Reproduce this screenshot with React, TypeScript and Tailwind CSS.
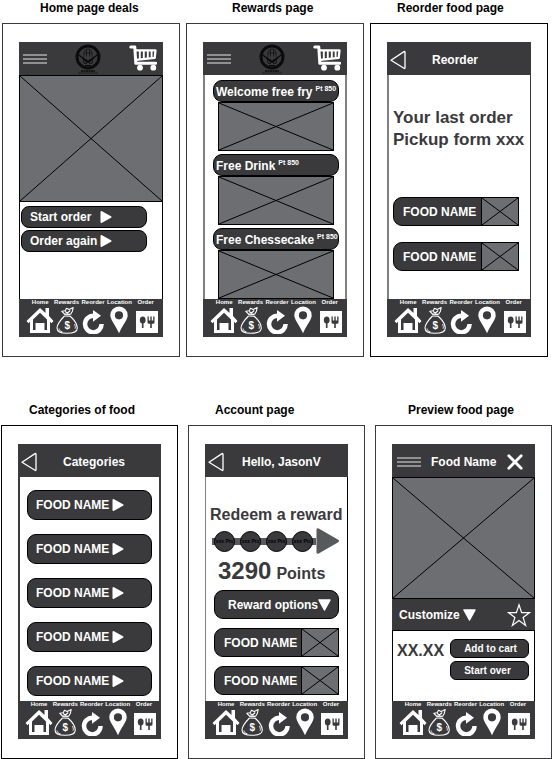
import React from 'react';
import { clsx } from 'clsx';

type BoxProps = { className?: string };
type ChildrenProps = BoxProps & { children: React.ReactNode };

/* ---------- icons ---------- */

const MenuIcon = () => (
  <svg width="24" height="10" viewBox="0 0 24 10" stroke="#e6e6e6" strokeWidth="1.2">
    <path d="M0 1h24M0 5h24M0 9h24" />
  </svg>
);

const LogoIcon = () => (
  <svg width="26" height="30" viewBox="0 0 26 30" fill="none" stroke="#0b0b0b">
    <circle cx="13" cy="13" r="11" strokeWidth="3" />
    <path d="M9 13V9c0-2.500 2-4 4-4s4 1.500 4 4v4M11.500 5.500v7M14.500 5.500v7M9 9h8" strokeWidth="0.700" />
    <path d="M4 11l8 7M22 11l-8 7M7 13l6 5 6-5" strokeWidth="1.300" />
    <circle cx="10.500" cy="17.500" r="2" strokeWidth="1" />
    <circle cx="15.500" cy="17.500" r="2" strokeWidth="1" />
    <path d="M10 21.500h6" strokeWidth="1" />
    <path d="M6 27h14" strokeWidth="1.500" strokeDasharray="2 0.500" />
    <path d="M3 29h20" strokeWidth="0.500" />
  </svg>
);

const CartIcon = () => (
  <svg width="28" height="28" viewBox="0 0 28 28" fill="none" stroke="#fff" strokeLinecap="round" strokeLinejoin="round">
    <path d="M1.800 2h4l1 16.300h20" strokeWidth="3" />
    <path d="M6.500 5.400h20l-.8 7.400L7 14.800" strokeWidth="2.300" />
    <path d="M10.800 6v8M14.800 6v7.500M18.800 6v7.200M22.600 6v6.800" strokeWidth="1.900" />
    <circle cx="11" cy="22.700" r="2.900" fill="#fff" stroke="none" />
    <circle cx="24.300" cy="22.700" r="2.900" fill="#fff" stroke="none" />
  </svg>
);

const BackIcon = () => (
  <svg width="16" height="20" viewBox="0 0 16 20" fill="none" stroke="#fff" strokeWidth="1.300" strokeLinejoin="round">
    <path d="M1 10.200 14 1.600q1-.5 1 .6v15.600q0 1.100-1 .5z" />
  </svg>
);

const CloseIcon = () => (
  <svg width="16" height="16" viewBox="0 0 16 16" stroke="#fff" strokeWidth="2.800" strokeLinecap="round">
    <path d="M1.800 1.800l12.400 12.400M14.200 1.800L1.800 14.200" />
  </svg>
);

const StarIcon = () => (
  <svg width="24" height="24" viewBox="0 0 24 24" fill="none" stroke="#fff" strokeWidth="1.200">
    <path d="M12 1.800l2.600 7.800h8l-6.500 4.900 2.500 7.900-6.600-4.900-6.600 4.900 2.500-7.900L1.400 9.600h8z" />
  </svg>
);

const PlayIcon = () => (
  <svg width="12" height="14" viewBox="0 0 12 14" fill="#fff" stroke="#fff" strokeWidth="2" strokeLinejoin="round">
    <path d="M1.500 2l9 5-9 5z" />
  </svg>
);

const DownIcon = () => (
  <svg width="13" height="13" viewBox="0 0 13 13" fill="#fff" stroke="#fff" strokeWidth="1.500" strokeLinejoin="round">
    <path d="M1 2h11L6.500 12z" />
  </svg>
);

const HomeIcon = () => (
  <>
    <path d="M19.500 2h3.500v8l4.500 5-2 2.200L24 15.700V27H4V15.700L2.500 17.200.5 15 14 2l5.500 5z" fill="#fff" />
    <path d="M7 13.500l7-6.800 7 6.800V24h-2.500v-7h-9v7H7z" fill="#3a3a3c" />
  </>
);

const RewardsIcon = () => (
  <g fill="none" stroke="#fff" strokeWidth="1.100" strokeLinejoin="round">
    <path d="M12 8.500L8.800 5.300l3.400-.6 1.300-2.500 2.700 1.300 4-2-.8 3.700-1.600 2.800-1.800.8z" />
    <path d="M12 5.500l2.500 1.500 2.700-2.500M12 8l5 .3M11.500 10l5.500.2" />
    <path d="M11.500 10C8 13.500 4 17.500 4 22c0 4 3 5.300 10 5.300s10.300-1.300 10.300-5.300c0-4.500-3.500-8.500-7.300-12" />
    <path d="M6 22.500c.3 2 1.300 3 3.500 3.400M21.500 18c.9 2 1 3.500.6 4.700" strokeWidth="0.900" />
    <text x="14.200" y="23.300" fill="#fff" stroke="none" fontSize="10" fontWeight="bold" textAnchor="middle">
      $
    </text>
  </g>
);

const ReorderIcon = () => (
  <>
    <path d="M14.500 9.800A8.300 8.300 0 1 0 22.600 18" fill="none" stroke="#fff" strokeWidth="4.500" />
    <path d="M14 4l8 5.800-8 6z" fill="#fff" />
  </>
);

const LocationIcon = () => (
  <path
    fill="#fff"
    fillRule="evenodd"
    d="M14 .5a8.700 8.700 0 0 1 8.700 8.700c0 4.300-5 9.800-8.700 18-3.700-8.200-8.700-13.700-8.700-18A8.700 8.700 0 0 1 14 .5zm0 4.700a4.100 4.100 0 1 0 0 8.200 4.100 4.100 0 0 0 0-8.200z"
  />
);

const OrderIcon = () => (
  <>
    <path d="M4 5h22v22H4z" fill="#fff" />
    <ellipse cx="10.700" cy="14" rx="2.900" ry="3.600" fill="#3a3a3c" />
    <path d="M10.700 16v6M19 16v6" stroke="#3a3a3c" strokeWidth="1.600" />
    <path d="M15.500 10.500h1.300v4h1.500v-4h1.400v4h1.500v-4h1.300v5.700q0 1.500-1.500 1.500h-4q-1.500 0-1.500-1.500z" fill="#3a3a3c" />
  </>
);

const navItems = [
  { label: 'Home', icon: HomeIcon },
  { label: 'Rewards', icon: RewardsIcon },
  { label: 'Reorder', icon: ReorderIcon },
  { label: 'Location', icon: LocationIcon },
  { label: 'Order', icon: OrderIcon },
];

/* ---------- shared blocks ---------- */

const BottomNav = () => (
  <nav className="grid grid-cols-5 bg-[#3a3a3c] pl-2 pr-1 pb-[3px]">
    {navItems.map(({ label, icon: Icon }) => (
      <a key={label} href="#" className="flex min-w-0 flex-col items-center text-[6px] leading-[7px] font-bold whitespace-nowrap text-white">
        {label}
        <svg className="shrink-0" width="28" height="28" viewBox="0 0 28 28">
          <Icon />
        </svg>
      </a>
    ))}
  </nav>
);

const Placeholder: React.FC<BoxProps> = ({ className }) => (
  <div className={clsx('border border-black bg-[#6d6e71]', className)}>
    <svg className="block h-full w-full" viewBox="0 0 100 100" preserveAspectRatio="none" stroke="#000">
      <path d="M0 0l100 100M100 0L0 100" vectorEffect="non-scaling-stroke" />
    </svg>
  </div>
);

const Header: React.FC<ChildrenProps> = ({ className, children }) => (
  <header className={clsx('flex h-[33px] items-center bg-[#3a3a3c] text-white', className)}>{children}</header>
);

const BackHeader: React.FC<{ title: string; className?: string }> = ({ title, className = 'gap-[26px]' }) => (
  <Header className={clsx('pl-[3px] pt-[2px]', className)}>
    <button aria-label="Back">
      <BackIcon />
    </button>
    <h3>{title}</h3>
  </Header>
);

const BrandHeader = () => (
  <Header className="justify-between pl-1 pr-[6px]">
    <button aria-label="Menu">
      <MenuIcon />
    </button>
    <LogoIcon />
    <button aria-label="Cart">
      <CartIcon />
    </button>
  </Header>
);

const Pill: React.FC<ChildrenProps> = ({ className, children }) => (
  <button className={clsx('flex items-center border border-black bg-[#3a3a3c] whitespace-nowrap text-white', className)}>
    {children}
  </button>
);

const FoodRow = () => (
  <Pill className="h-[29px] rounded-l-[9px] pl-[9px]">
    FOOD NAME
    <Placeholder className="-my-px -mr-px ml-auto h-[29px] w-[38px]" />
  </Pill>
);

const Screen: React.FC<ChildrenProps & { title: string; titleClass: string }> = ({ title, titleClass, className, children }) => (
  <section className="min-w-0 flex-1">
    <h2 className={clsx('mb-2 leading-[14px] text-black', titleClass)}>{title}</h2>
    <div className={clsx('border px-4 pt-[18px] pb-[19px]', className)}>
      {children}
      <BottomNav />
    </div>
  </section>
);

/* ---------- screens ---------- */

const HomeScreen = () => (
  <Screen title="Home page deals" titleClass="pl-[38px]" className="border-[#3a3a3c]">
    <BrandHeader />
    <div className="min-h-56 border-x border-black">
      <Placeholder className="-mx-px h-[127px]" />
      <div className="flex flex-col gap-[2px] pt-1 pl-px pr-[15px]">
        {['Start order', 'Order again'].map(label => (
          <Pill key={label} className="h-[22px] rounded-[8px] pl-2">
            <span className="min-w-[70px] text-left">{label}</span>
            <PlayIcon />
          </Pill>
        ))}
      </div>
    </div>
  </Screen>
);

const RewardsScreen = () => (
  <Screen title="Rewards page" titleClass="pl-[46px]" className="border-[#3a3a3c]">
    <BrandHeader />
    <div className="flex min-h-56 flex-col gap-[3px] border-x-2 border-[#808080] pt-[5px] pl-2 pr-[6px]">
      {['Welcome free fry', 'Free Drink', 'Free Chessecake'].map(name => (
        <article key={name}>
          <div className="flex h-[22px] gap-[3px] rounded-[9px] border border-black bg-[#3a3a3c] pl-[2px] whitespace-nowrap text-white">
            <h3 className="leading-[22px]">{name}</h3>
            <span className="text-[7px] leading-4">Pt 850</span>
          </div>
          <Placeholder className="mx-[5px] h-[49px]" />
        </article>
      ))}
    </div>
  </Screen>
);

const ReorderScreen = () => (
  <Screen title="Reorder food page" titleClass="pl-[27px]" className="border-black">
    <BackHeader title="Reorder" />
    <div className="min-h-56 border-l-2 border-r border-l-[#808080] border-r-[#3a3a3c] pt-8 pl-1 pr-[11px]">
      <p className="text-[17px] leading-[22px] whitespace-nowrap text-[#3a3a3c]">
        Your last order
        <br />
        Pickup form xxx
      </p>
      <div className="mt-[46px] flex flex-col gap-4">
        <FoodRow />
        <FoodRow />
      </div>
    </div>
  </Screen>
);

const CategoriesScreen = () => (
  <Screen title="Categories of food" titleClass="pl-7" className="border-black">
    <BackHeader title="Categories" />
    <div className="flex min-h-56 flex-col gap-[14px] border-x-2 border-[#3a3a3c] px-[7px] pt-[13px]">
      {[1, 2, 3, 4, 5].map(n => (
        <Pill key={n} className="h-[30px] rounded-[9px] pl-2">
          <span className="min-w-[76px] text-left">FOOD NAME</span>
          <PlayIcon />
        </Pill>
      ))}
    </div>
  </Screen>
);

const ProgressBar = () => (
  <div className="relative flex h-7 items-center pl-[2px]">
    <div className="h-[7px] w-[106px] bg-[#58595b]" />
    <svg width="24" height="28" viewBox="0 0 24 28" fill="#58595b" stroke="#58595b" strokeWidth="3" strokeLinejoin="round">
      <path d="M2 2.500L22 14 2 25.500z" />
    </svg>
    <div className="absolute left-1 flex gap-[5px]">
      {[1, 2, 3, 4].map(n => (
        <span
          key={n}
          className="flex size-[21px] items-center justify-center rounded-full border border-black bg-[#3a3a3c] text-[5px] leading-none whitespace-nowrap text-black"
        >
          xxx Pts
        </span>
      ))}
    </div>
  </div>
);

const AccountScreen = () => (
  <Screen title="Account page" titleClass="pl-[27px]" className="border-[#3a3a3c]">
    <BackHeader title="Hello, JasonV" className="gap-[18px]" />
    <div className="min-h-56 border-x border-l-[#808080] border-r-black pt-[26px] pl-1 pr-2">
      <h4 className="text-[16px] leading-6 whitespace-nowrap text-[#3a3a3c]">Redeem a reward</h4>
      <ProgressBar />
      <p className="mt-1 flex items-baseline gap-[5px] pl-2 text-[24px] leading-6 text-[#3a3a3c]">
        3290 <span className="text-[16px]">Points</span>
      </p>
      <div className="mt-1 flex flex-col gap-[9px] pl-1">
        <Pill className="h-[29px] justify-between rounded-[9px] pl-[13px] pr-[7px]">
          Reward options
          <DownIcon />
        </Pill>
        <FoodRow />
        <FoodRow />
      </div>
    </div>
  </Screen>
);

const PreviewScreen = () => (
  <Screen title="Preview food page" titleClass="pl-[33px]" className="border-[#3a3a3c]">
    <Header className="gap-[10px] pt-[2px] pl-[5px] pr-3">
      <button aria-label="Menu">
        <MenuIcon />
      </button>
      <h3>Food Name</h3>
      <button aria-label="Close" className="ml-auto">
        <CloseIcon />
      </button>
    </Header>
    <div className="min-h-56 border-x border-black">
      <Placeholder className="-mx-px h-[122px]" />
      <div className="-mx-px flex h-8 items-center justify-between border-b border-black bg-[#3a3a3c] pl-[7px] pr-1 text-white">
        <button className="flex items-center gap-[3px]">
          Customize
          <DownIcon />
        </button>
        <button aria-label="Favorite">
          <StarIcon />
        </button>
      </div>
      <div className="flex gap-[6px] pt-2 pl-1 pr-[5px]">
        <p className="text-[16px] leading-6 text-[#3a3a3c]">XX.XX</p>
        <div className="flex flex-1 flex-col gap-[3px] text-[10px]">
          <Pill className="h-[19px] rounded-[6px] pl-[13px]">Add to cart</Pill>
          <Pill className="h-[19px] rounded-[6px] pl-[13px]">Start over</Pill>
        </div>
      </div>
    </div>
  </Screen>
);

export default function App() {
  return (
    <main className="bg-white font-['Liberation_Sans',Arial,sans-serif] text-[12px] leading-[14px] font-bold">
      <div className="flex gap-[6px] pt-px pl-[2px] pr-1">
        <HomeScreen />
        <RewardsScreen />
        <ReorderScreen />
      </div>
      <div className="mt-[46px] flex gap-[10px] pl-px">
        <CategoriesScreen />
        <AccountScreen />
        <PreviewScreen />
      </div>
    </main>
  );
}
